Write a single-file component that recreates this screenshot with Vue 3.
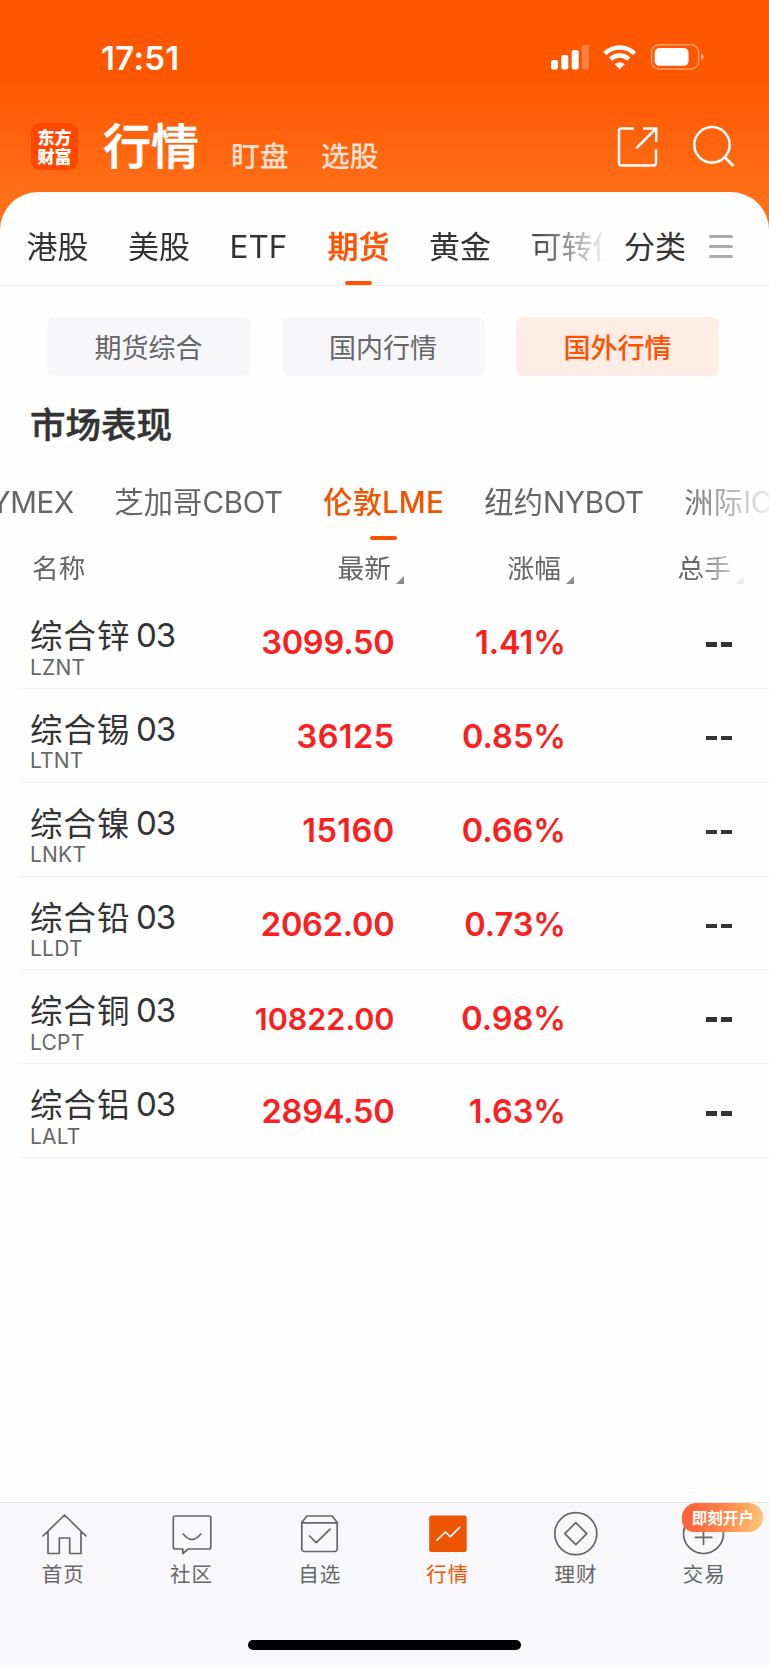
<script setup>
const tabs = [
  { t: '港股', w: 101.5 },
  { t: '美股', w: 101.5 },
  { t: 'ETF', w: 98, en: true },
  { t: '期货', w: 101.5 },
  { t: '黄金', w: 101.5 },
  { t: '可转债', w: 95 },
]
const pills = ['期货综合', '国内行情', '国外行情']
const markets = [
  { zh: '', en: 'NYMEX' },
  { zh: '芝加哥', en: 'CBOT' },
  { zh: '伦敦', en: 'LME', on: true },
  { zh: '纽约', en: 'NYBOT' },
  { zh: '洲际', en: 'ICE' },
]
const rows = [
  ['综合锌', 'LZNT', '3099.50', '1.41%'],
  ['综合锡', 'LTNT', '36125', '0.85%'],
  ['综合镍', 'LNKT', '15160', '0.66%'],
  ['综合铅', 'LLDT', '2062.00', '0.73%'],
  ['综合铜', 'LCPT', '10822.00', '0.98%'],
  ['综合铝', 'LALT', '2894.50', '1.63%'],
]
</script>

<template>
  <div class="phone">
    <header class="top">
      <div class="status">
        <span class="time">17:51</span>
        <svg class="sig" width="156" height="28" viewBox="549 43 156 28" fill="#fff">
          <rect x="551" y="60" width="7" height="9.5" rx="2" />
          <rect x="561.3" y="55" width="7" height="14.5" rx="2" />
          <rect x="571.7" y="50" width="7" height="19.5" rx="2" />
          <rect x="582" y="45" width="7" height="24.5" rx="2" opacity=".25" />
          <g fill="none" stroke="#fff" stroke-width="4.6">
            <path d="M604.8 53.6a21.2 21.2 0 0 1 29.8 0" />
            <path d="M610.6 59.2a13 13 0 0 1 18.2 0" />
          </g>
          <path d="M619.7 69.3l-5-5a7.2 7.2 0 0 1 10 0z" />
          <rect x="651.6" y="44.8" width="47" height="24.2" rx="7.5" fill="none" stroke="#fff" stroke-opacity=".42" stroke-width="1.4" />
          <rect x="654.6" y="48" width="34" height="17.8" rx="4.8" />
          <path d="M701.2 53.5c3.400 1.400 3.400 5.600 0 7z" opacity=".5" />
        </svg>
      </div>
      <div class="nav">
        <div class="logo"><span>东方</span><span>财富</span></div>
        <h1>行情</h1>
        <span class="sub">盯盘</span>
        <span class="sub">选股</span>
        <svg class="acts" width="120" height="44" viewBox="616 124 120 44" fill="none" stroke="#fff" stroke-width="2.5">
          <path d="M634 128.500h-12.500a2.500 2.500 0 0 0-2.500 2.500v32a2.500 2.500 0 0 0 2.500 2.500h32a2.500 2.500 0 0 0 2.500-2.500v-13.500M643 128.500h13.200v13.500M656 128.500l-19.800 19.800" />
          <circle cx="712" cy="144.800" r="17.700" />
          <path d="M725 157.500l8.500 8.500" stroke-width="2.800" />
        </svg>
      </div>
    </header>

    <main class="card">
      <nav class="tabs">
        <div class="scroll">
          <span v-for="x in tabs" :key="x.t" class="tab" :class="{ on: x.t === '期货', en: x.en }" :style="{ width: x.w + 'px' }">{{ x.t }}</span>
        </div>
        <span class="cat">分类</span>
        <i class="menu"><b></b><b></b><b></b></i>
      </nav>
      <div class="pills">
        <span v-for="(p, i) in pills" :key="p" :class="{ on: i === 2 }">{{ p }}</span>
      </div>
      <h2>市场表现</h2>
      <div class="markets">
        <span v-for="m in markets" :key="m.en" class="mk" :class="{ on: m.on }"><em>{{ m.zh }}</em>{{ m.en }}</span>
      </div>
      <div class="head">
        <span class="c0">名称</span>
        <span class="c1">最新<i></i></span>
        <span class="c2">涨幅<i></i></span>
        <span class="c3">总手<i></i></span>
      </div>
      <div class="list">
        <div v-for="r in rows" :key="r[1]" class="row">
          <div class="name">
            <div class="nm"><em>{{ r[0] }}</em>03</div>
            <div class="code">{{ r[1] }}</div>
          </div>
          <div class="price" :class="{ long: r[2].length > 7, whole: !r[2].includes('.') }">{{ r[2] }}</div>
          <div class="pct">{{ r[3] }}</div>
          <div class="vol"><b></b><b></b></div>
        </div>
      </div>
    </main>

    <footer class="bar">
      <div class="items">
        <div class="it">
          <svg width="48" height="46" viewBox="40 1510 48 46"><path d="M43 1536l21.500-21 21.500 21M48 1531.500v22h11.300v-15.500h10.400v15.500h11.300v-22" /></svg>
          <span>首页</span>
        </div>
        <div class="it">
          <svg width="48" height="46" viewBox="168.200 1510 48 46"><path d="M175.500 1516h33.500a2 2 0 0 1 2 2v29a2 2 0 0 1-2 2h-20.500l-5.500 4.500v-4.500h-7.500a2 2 0 0 1-2-2v-29a2 2 0 0 1 2-2zM183.500 1534q8.700 11 17.400 0" /></svg>
          <span>社区</span>
        </div>
        <div class="it">
          <svg width="48" height="46" viewBox="296.500 1510 48 46"><path d="M302.300 1522.500l5-6.500h25.400l5 6.500v26.500a2.500 2.500 0 0 1-2.500 2.500h-30.400a2.500 2.500 0 0 1-2.500-2.500zM302.500 1522.800h35.500M310 1536l6.800 6.600 13.700-13.400" /></svg>
          <span>自选</span>
        </div>
        <div class="it on">
          <svg width="48" height="46" viewBox="425 1510 48 46"><rect x="429.200" y="1515.500" width="37.500" height="36.500" rx="2.500" fill="#ee5500" stroke="none" /><path d="M437 1540.200l8.500-8.400 4.800 5 9.300-9.500" stroke="#fff" /></svg>
          <span>行情</span>
        </div>
        <div class="it">
          <svg width="48" height="46" viewBox="553.200 1510 48 46"><circle cx="576" cy="1533.700" r="21" /><path d="M576 1522.700l11 11-11 11-11-11z" /></svg>
          <span>理财</span>
        </div>
        <div class="it">
          <svg width="48" height="46" viewBox="681.200 1510 48 46"><circle cx="703.700" cy="1533.500" r="20" /><path d="M695.500 1537.300h16.500M703.700 1529v15.500" /></svg>
          <span>交易</span>
          <div class="badge">即刻开户</div>
        </div>
      </div>
      <div class="home"></div>
    </footer>
  </div>
</template>

<style>
body { margin: 0; background: #fff; }
</style>
<style scoped>
* { box-sizing: border-box; }
em, i { font-style: normal; }
.phone { width: 769px; height: 1665px; display: flex; flex-direction: column; overflow: hidden; background: #fefefe; font-family: "Noto Sans CJK SC", sans-serif; color: #333; white-space: nowrap; }
.top { height: 232px; flex: none; background: linear-gradient(#ff5600 0, #ff5700 80px, #ff7019 200px); }
.status { height: 100px; padding: 38px 64px 0 101px; display: flex; justify-content: space-between; color: #fff; }
.time { font: 600 33px/40px Inter, sans-serif; letter-spacing: 0.3px; }
.sig { margin-top: 5px; }
.nav { display: flex; padding-left: 31px; color: #fff; }
.logo { width: 47px; height: 47px; margin-top: 23px; padding-top: 4px; border-radius: 9px; background: #ff4700; display: flex; flex-direction: column; align-items: center; font-weight: 900; font-size: 17px; line-height: 19px; }
.logo span { height: 19px; }
h1 { margin: 7px 0 0 25px; width: 128px; font-size: 48px; line-height: 72px; font-weight: 500; -webkit-text-stroke: 0.7px; }
.sub { font-size: 28.800px; line-height: 40px; margin-top: 34.500px; font-weight: 500; color: #ffe0cf; width: 90px; }
.acts { margin: 24px 0 0 205px; }
.card { margin-top: -40.500px; flex: 1; background: #fefefe; border-radius: 38px 38px 0 0; }
.tabs { height: 94.500px; border-bottom: 1px solid #ececee; display: flex; padding-left: 26.500px; }
.scroll { width: 576px; margin-right: 1.500px; display: flex; overflow: hidden; -webkit-mask: linear-gradient(90deg, #000 500px, transparent 584px); mask: linear-gradient(90deg, #000 500px, transparent 584px); }
.tab, .cat { flex: none; font-size: 31px; line-height: 44px; padding-top: 31px; }
.tab.en { font-family: Inter, sans-serif; font-size: 31.500px; padding: 33px 0 0 0; letter-spacing: 0; }
.tab.on { color: #ff5200; font-weight: 500; -webkit-text-stroke: 0.3px; position: relative; }
.tab.on::after { content: ""; position: absolute; left: 17px; bottom: 0; width: 27px; height: 4.500px; border-radius: 2px; background: #ff5200; }
.cat { margin-left: 20px; width: 85px; }
.menu { padding-top: 43px; display: flex; flex-direction: column; gap: 7px; }
.menu b { width: 24px; height: 3px; border-radius: 1.500px; background: #aaa; }
.pills { display: flex; gap: 31.500px; padding: 31px 0 0 47px; }
.pills span { width: 203px; height: 59px; border-radius: 7px; background: #f7f7fa; color: #666; text-align: center; font-size: 27px; line-height: 59px; }
.pills .on { background: #ffede5; color: #ff5200; font-weight: 500; }
h2 { margin: 22px 0 0 30px; font-size: 35.500px; line-height: 50px; font-weight: 500; -webkit-text-stroke: 0.5px; }
.markets { display: flex; gap: 40.500px; margin-left: -31.500px; height: 93px; -webkit-mask: linear-gradient(90deg, #000 710px, transparent 810px); mask: linear-gradient(90deg, #000 710px, transparent 810px); }
.mk { flex: none; height: 92px; padding-top: 32px; font: 400 29.500px/40px Inter, "Noto Sans CJK SC", sans-serif; color: #666; letter-spacing: -0.300px; position: relative; }
.mk em { font-family: "Noto Sans CJK SC", sans-serif; font-size: 29.200px; letter-spacing: 0.200px; }
.mk.on, .mk.on em { color: #f05400; font-weight: 500; }
.mk.on { letter-spacing: 0.100px; }
.mk.on::after { content: ""; position: absolute; left: 47px; bottom: 0; width: 27px; height: 4px; border-radius: 2px; background: #f85200; }
.head { height: 54px; display: flex; font-size: 26.700px; line-height: 38px; color: #666; padding: 6.500px 0 0 32px; -webkit-mask: linear-gradient(90deg, #000 695px, transparent 750px); mask: linear-gradient(90deg, #000 695px, transparent 750px); }
.head span { display: flex; }
.head i { border: 4px solid; border-color: transparent #8b8b90 #8b8b90 transparent; width: 0; height: 0; margin: 28.500px 0 0 5px; }
.c0 { width: 305.500px; }
.c1, .c2 { width: 170px; }
.row { margin-left: 20px; height: 93.850px; border-bottom: 1px solid #f2f2f4; display: flex; padding-left: 10px; font-family: Inter, sans-serif; }
.name { width: 180px; }
.nm { font-size: 33px; line-height: 40px; margin-top: 20px; display: flex; letter-spacing: -1px; }
.nm em { font-family: "Noto Sans CJK SC", sans-serif; font-size: 32.500px; letter-spacing: 1px; width: 106px; margin-top: -1px; }
.code { font-size: 21px; line-height: 26px; color: #666; letter-spacing: .2px; margin-top: -0.500px; }
.price, .pct { font-weight: 600; font-size: 32.500px; line-height: 40px; color: #fa2020; text-align: right; margin-top: 28.200px; }
.price { width: 184.500px; letter-spacing: -0.200px; }
.price.whole { letter-spacing: .4px; }
.price.long { font-size: 30.500px; letter-spacing: 0; }
.pct { width: 171.500px; }
.vol { margin: 47px 0 0 140px; display: flex; gap: 4px; }
.vol b { width: 11px; height: 4.500px; background: #333; }
.bar { flex: none; height: 163px; border-top: 1.500px solid #e6e6e9; background: #f8f8fb; }
.items { display: flex; height: 137px; padding-top: 7px; }
.it { width: 128.200px; display: flex; flex-direction: column; align-items: center; position: relative; color: #666; font-size: 20.500px; line-height: 30px; letter-spacing: 1px; }
.it svg { fill: none; stroke: #666; stroke-width: 1.700; stroke-linecap: round; stroke-linejoin: round; }
.it span { margin: 2px 1.500px 0 0; }
.it.on { color: #ee5500; }
.badge { position: absolute; left: 41.500px; top: -7.500px; width: 81px; height: 29.500px; border-radius: 15px 15px 15px 12px; background: linear-gradient(100deg, #ff6138 10%, #ff8a4a 55%, #ffca7c); color: #fff; font-size: 15.500px; font-weight: 700; line-height: 28px; letter-spacing: .1px; text-align: center; }
.home { width: 273.500px; height: 10px; margin-left: 247.500px; border-radius: 5px; background: #000; }
</style>
